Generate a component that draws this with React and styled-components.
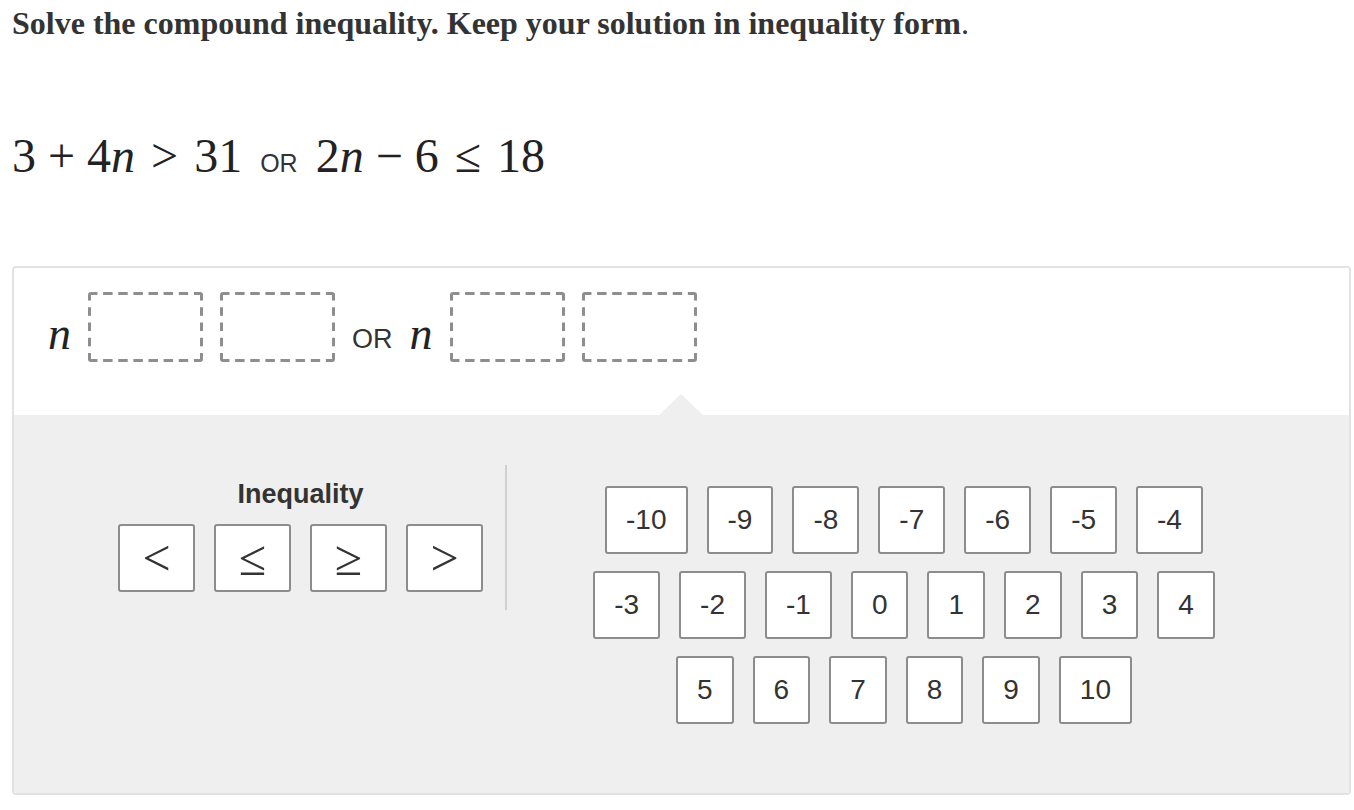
import React from 'react'
import styled, { createGlobalStyle } from 'styled-components'

const GlobalStyle = createGlobalStyle`
   body{
      margin: 0;
      background: #fff;
      color: #333;
      font-family: "Liberation Sans", Arial, sans-serif;
   }
`;

const dash = '#8e8e8e';

const Page = styled.div`
   padding-top: 7px;
`;

const Title = styled.h1`
   margin: 0 0 0 12px;
   font-family: "Liberation Serif", "Times New Roman", serif;
   font-size: 32px;
   line-height: 32px;
   font-weight: bold;
   color: #333;
   span{
      font-weight: normal;
   }
`;

const MathLine = styled.div`
   margin: 93px 0 0 12px;
   display: flex;
   align-items: baseline;
   font-family: "Liberation Serif", "Times New Roman", serif;
   font-size: 48px;
   line-height: 48px;
   color: #222;
`;

const Var = styled.i`
   font-style: italic;
`;

const Bin = styled.span`
   margin: 0 12px;
`;

const Rel = styled.span`
   margin: 0 16px;
`;

const Word = styled.span`
   margin: 0 18px;
   font-family: "Liberation Sans", Arial, sans-serif;
   font-size: 25px;
   color: #333;
`;

const Panel = styled.div`
   margin: 79px 3px 0 12px;
   border: 2px solid #e2e2e2;
   border-radius: 4px;
   overflow: hidden;
`;

const Answer = styled.div`
   height: 147px;
   box-sizing: border-box;
   padding: 24px 0 0 34px;
   background: #fff;
`;

const AnswerRow = styled.div`
   display: flex;
   align-items: center;
   gap: 17px;
   height: 70px;
   font-family: "Liberation Serif", "Times New Roman", serif;
   color: #222;
`;

const RowVar = styled(Var)`
   font-size: 46px;
   line-height: 1;
   margin-top: 13px;
`;

const RowWord = styled.span`
   font-family: "Liberation Sans", Arial, sans-serif;
   font-size: 27px;
   line-height: 1;
   margin-top: 25px;
   color: #333;
`;

const Slot = styled.div`
   width: 115px;
   height: 70px;
   border-radius: 3px;
   background-image:
      linear-gradient(90deg, ${dash} 9px, transparent 9px),
      linear-gradient(90deg, ${dash} 9px, transparent 9px),
      linear-gradient(180deg, ${dash} 9px, transparent 9px),
      linear-gradient(180deg, ${dash} 9px, transparent 9px);
   background-size: 15.14px 3px, 15.14px 3px, 3px 15.25px, 3px 15.25px;
   background-position: 0 0, 0 100%, 0 0, 100% 0;
   background-repeat: repeat-x, repeat-x, repeat-y, repeat-y;
`;

const Keypad = styled.div`
   position: relative;
   height: 378px;
   box-sizing: border-box;
   padding-top: 50px;
   display: flex;
   align-items: flex-start;
   background: #efefef;
   &::before{
      content: '';
      position: absolute;
      top: -21px;
      left: 645px;
      border-left: 22px solid transparent;
      border-right: 22px solid transparent;
      border-bottom: 21px solid #efefef;
   }
`;

const SymbolGroup = styled.div`
   margin: 16px 0 0 104px;
   width: 365px;
   display: flex;
   flex-direction: column;
   align-items: center;
   gap: 16px;
`;

const GroupLabel = styled.div`
   font-size: 27px;
   line-height: 27px;
   font-weight: bold;
   color: #333;
`;

const SymbolRow = styled.div`
   display: flex;
   gap: 19px;
`;

const Key = styled.button`
   height: 68px;
   box-sizing: border-box;
   border: 2px solid #8c8c8c;
   border-radius: 3px;
   background: #fff;
   color: #333;
   display: flex;
   align-items: center;
   justify-content: center;
   cursor: pointer;
   padding: 0;
`;

const SymbolKey = styled(Key)`
   width: 77px;
   font-family: "Liberation Serif", "Times New Roman", serif;
   font-size: 50px;
   line-height: 1;
`;

const Divider = styled.div`
   margin-left: 22px;
   width: 2px;
   height: 145px;
   background: #d0d0d0;
`;

const Numbers = styled.div`
   margin: 21px 0 0 72px;
   width: 650px;
   display: flex;
   flex-wrap: wrap;
   justify-content: center;
   gap: 17px 19px;
`;

const NumberKey = styled(Key)`
   padding: 0 19px;
   font-family: "Liberation Sans", Arial, sans-serif;
   font-size: 28px;
`;

const symbols = ['<', '≤', '≥', '>'];
const numbers = [];
for (let i = -10; i <= 10; i++) numbers.push(i);

const App = () => {
   return (
      <>
         <GlobalStyle />
         <Page>
            <Title>Solve the compound inequality. Keep your solution in inequality form<span>.</span></Title>

            <MathLine>
               <span>3</span>
               <Bin>+</Bin>
               <span>4<Var>n</Var></span>
               <Rel>&gt;</Rel>
               <span>31</span>
               <Word>OR</Word>
               <span>2<Var>n</Var></span>
               <Bin>−</Bin>
               <span>6</span>
               <Rel>≤</Rel>
               <span>18</span>
            </MathLine>

            <Panel>
               <Answer>
                  <AnswerRow>
                     <RowVar>n</RowVar>
                     <Slot />
                     <Slot />
                     <RowWord>OR</RowWord>
                     <RowVar>n</RowVar>
                     <Slot />
                     <Slot />
                  </AnswerRow>
               </Answer>

               <Keypad>
                  <SymbolGroup>
                     <GroupLabel>Inequality</GroupLabel>
                     <SymbolRow>
                        {symbols.map(s => <SymbolKey key={s}>{s}</SymbolKey>)}
                     </SymbolRow>
                  </SymbolGroup>
                  <Divider />
                  <Numbers>
                     {numbers.map(n => <NumberKey key={n}>{n}</NumberKey>)}
                  </Numbers>
               </Keypad>
            </Panel>
         </Page>
      </>
   )
}
export default App
